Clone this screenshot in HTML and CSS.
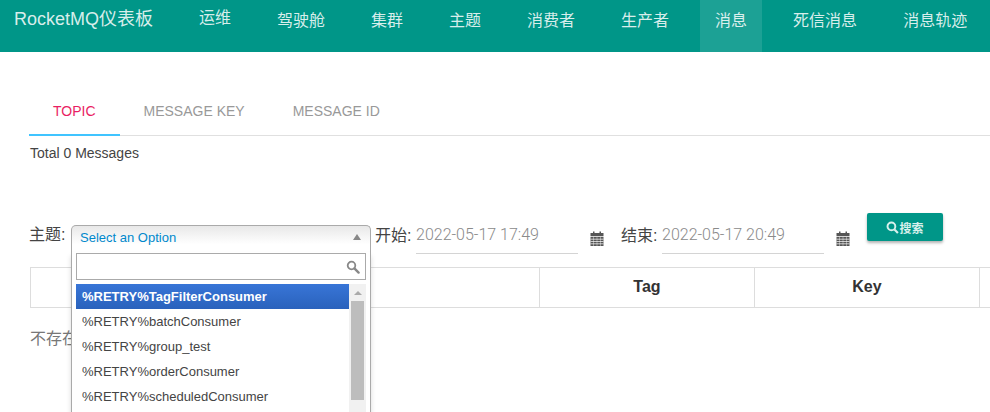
FILE: index.html
```html
<!DOCTYPE html>
<html lang="zh">
<head>
<meta charset="utf-8">
<title>RocketMQ</title>
<link rel="stylesheet" href="styles.css">
</head>
<body>
<header class="navbar">
  <a class="brand">RocketMQ仪表板</a>
  <nav class="nav">
    <a class="nav-item nav-first">运维</a>
    <a class="nav-item">驾驶舱</a>
    <a class="nav-item">集群</a>
    <a class="nav-item">主题</a>
    <a class="nav-item">消费者</a>
    <a class="nav-item">生产者</a>
    <a class="nav-item active">消息</a>
    <a class="nav-item">死信消息</a>
    <a class="nav-item">消息轨迹</a>
  </nav>
</header>
<main class="main">
  <div class="tabs">
    <a class="tab tab-active">TOPIC</a>
    <a class="tab">MESSAGE KEY</a>
    <a class="tab">MESSAGE ID</a>
  </div>
  <p class="total">Total 0 Messages</p>
  <form class="filter">
    <label class="label label-topic">主题:</label>
    <div class="select">
      <div class="select-head">
        <span>Select an Option</span>
        <i class="arrow-up"></i>
      </div>
      <div class="drop">
        <div class="search">
          <svg class="search-icon" width="14" height="14" viewBox="0 0 14 14"><circle cx="5.500" cy="5.500" r="3.800" fill="none" stroke="#888" stroke-width="1.800"/><path d="M8.400 8.400 12.600 12.600" stroke="#888" stroke-width="2.400" stroke-linecap="round"/></svg>
        </div>
        <div class="results">
          <ul class="options">
            <li class="option option-hi">%RETRY%TagFilterConsumer</li>
            <li class="option">%RETRY%batchConsumer</li>
            <li class="option">%RETRY%group_test</li>
            <li class="option">%RETRY%orderConsumer</li>
            <li class="option">%RETRY%scheduledConsumer</li>
          </ul>
          <div class="scrollbar">
            <i class="scroll-arrow"></i>
            <div class="thumb"></div>
          </div>
        </div>
      </div>
    </div>
    <label class="label label-start">开始:</label>
    <span class="date">2022-05-17 17:49</span>
    <svg class="cal" width="14" height="15" viewBox="0 0 14 15"><path fill="#555" d="M0.500 2h2.500V0.500h1.500V2h5V0.500H11V2h2.500v3H0.500zM0.500 5.800h13V15H0.500z"/><path stroke="#fff" stroke-width=".7" d="M0.500 8.200h13M0.500 10.500h13M0.500 12.800h13"/><path stroke="#fff" stroke-width=".4" d="M3.500 5.800V15M7 5.800V15M10.500 5.800V15"/></svg>
    <label class="label label-end">结束:</label>
    <span class="date">2022-05-17 20:49</span>
    <svg class="cal" width="14" height="15" viewBox="0 0 14 15"><path fill="#555" d="M0.500 2h2.500V0.500h1.500V2h5V0.500H11V2h2.500v3H0.500zM0.500 5.800h13V15H0.500z"/><path stroke="#fff" stroke-width=".7" d="M0.500 8.200h13M0.500 10.500h13M0.500 12.800h13"/><path stroke="#fff" stroke-width=".4" d="M3.500 5.800V15M7 5.800V15M10.500 5.800V15"/></svg>
    <button class="btn" type="button">
      <svg width="13" height="13" viewBox="0 0 12 12"><circle cx="5" cy="5" r="3.600" fill="none" stroke="#d8f0ec" stroke-width="1.800"/><path d="M7.800 7.800 11 11" stroke="#d8f0ec" stroke-width="2"/></svg>搜索
    </button>
  </form>
  <div class="table">
    <div class="cell cell-wide"></div>
    <div class="cell cell-tag">Tag</div>
    <div class="cell cell-key">Key</div>
    <div class="cell cell-rest"></div>
  </div>
  <p class="empty">不存在</p>
</main>
</body>
</html>
```
FILE: styles.css
```css
* { box-sizing: border-box; }
html, body { margin: 0; height: 412px; overflow: hidden; }
body {
  background: #fff;
  color: #333;
  font-family: "Liberation Sans", "Noto Sans CJK SC", sans-serif;
  font-size: 14px;
}
.navbar {
  height: 52px;
  background: #009688;
  color: rgba(255, 255, 255, .85);
  display: flex;
  align-items: flex-start;
}
.brand {
  font-size: 18px;
  line-height: 20px;
  padding: 9px 0 0 14px;
  width: 184px;
  flex: none;
}
.nav { display: flex; gap: 16px; }
.nav-item {
  font-size: 16px;
  line-height: 22px;
  padding: 10px 15px 20px;
  height: 52px;
}
.nav-first { padding-top: 7px; }
.nav-item.active { background: rgba(255, 255, 255, .11); }
.main { padding: 0 0 0 30px; }
.tabs {
  margin: 41px 0 0 -1px;
  height: 43px;
  display: flex;
  border-bottom: 1px solid #e0e0e0;
}
.tab {
  padding: 0 24px;
  height: 43px;
  line-height: 36px;
  color: #999;
  font-size: 14px;
  white-space: nowrap;
}
.tab-active {
  color: #e91e63;
  border-bottom: 2px solid #40c4ff;
}
.total { margin: 9px 0 0; font-size: 14px; line-height: 16px; color: #444; }
.filter {
  margin-top: 52px;
  height: 54px;
  display: flex;
  align-items: flex-start;
}
.label { color: #444; font-size: 16px; line-height: 22px; white-space: nowrap; }
.label-topic { margin: 11px 6px 0 -1px; width: 36px; }
.label-start { margin: 12px 4px 0; width: 37px; }
.label-end { margin: 12px 6px 0 17px; width: 35px; }
.select { position: relative; width: 300px; margin-top: 12px; }
.select-head {
  height: 27px;
  display: flex;
  justify-content: space-between;
  align-items: center;
  padding: 0 9px 4px 8px;
  border: 1px solid #aaa;
  border-bottom: 0;
  border-radius: 5px 5px 0 0;
  color: #08c;
  font-size: 13px;
  background: linear-gradient(#e8e8e8, #fff 70%);
}
.arrow-up {
  width: 0;
  height: 0;
  border: 4px solid transparent;
  border-top: 0;
  border-bottom: 6px solid #888;
}
.drop {
  position: absolute;
  top: 27px;
  left: 0;
  width: 300px;
  height: 160px;
  padding: 1px 4px 0;
  background: #fff;
  border: 1px solid #aaa;
  border-top: 0;
  border-bottom: 0;
  box-shadow: 0 4px 5px rgba(0, 0, 0, .15);
  z-index: 5;
  overflow: hidden;
}
.search {
  height: 27px;
  border: 1px solid #aaa;
  display: flex;
  align-items: center;
  justify-content: flex-end;
  padding-right: 5px;
}
.results { display: flex; margin-top: 4px; }
.options { list-style: none; margin: 0; padding: 0; width: 273px; flex: none; }
.option {
  height: 25px;
  line-height: 25px;
  padding-left: 6px;
  color: #444;
  font-size: 13px;
  white-space: nowrap;
}
.option-hi {
  color: #fff;
  font-weight: 700;
  background: linear-gradient(#3875d7, #2a62bc);
}
.scrollbar {
  flex: 1;
  height: 128px;
  background: #f1f1f1;
  display: flex;
  flex-direction: column;
  align-items: center;
  padding-top: 7px;
}
.scroll-arrow {
  width: 0;
  height: 0;
  border: 4px solid transparent;
  border-top: 0;
  border-bottom: 4px solid #aaa;
}
.thumb { width: 13px; height: 99px; margin-top: 6px; background: #bdbdbd; }
.date {
  width: 162px;
  height: 31px;
  margin-top: 10px;
  padding-top: 1px;
  border-bottom: 1px solid #d4d4d4;
  color: #8a8a8a;
  font-family: Roboto, sans-serif;
  font-weight: 300;
  font-size: 16px;
  line-height: 22px;
  white-space: nowrap;
  flex: none;
}
.cal { margin: 18px 0 0 12px; flex: none; }
.btn {
  width: 76px;
  height: 28px;
  margin: 0 0 0 17px;
  border: 0;
  border-radius: 2px;
  background: #009688;
  color: #d8f0ec;
  font-family: "Liberation Sans", "Noto Sans CJK SC", sans-serif;
  font-size: 12px;
  font-weight: 700;
  display: flex;
  align-items: center;
  justify-content: center;
  padding: 0;
  box-shadow: 0 2px 3px rgba(0, 0, 0, .3);
}
.table {
  display: flex;
  height: 41px;
  width: 1000px;
  border: 1px solid #ddd;
  border-right: 0;
}
.cell {
  display: flex;
  align-items: center;
  justify-content: center;
  padding-bottom: 2px;
  font-weight: 700;
  font-size: 16px;
  color: #333;
  border-right: 1px solid #ddd;
  flex: none;
}
.cell-wide { width: 509px; }
.cell-tag { width: 215px; }
.cell-key { width: 225px; }
.cell-rest { flex: 1; border-right: 0; }
.empty { margin: 21px 0 0; font-size: 16px; line-height: 20px; color: #777; }
```
